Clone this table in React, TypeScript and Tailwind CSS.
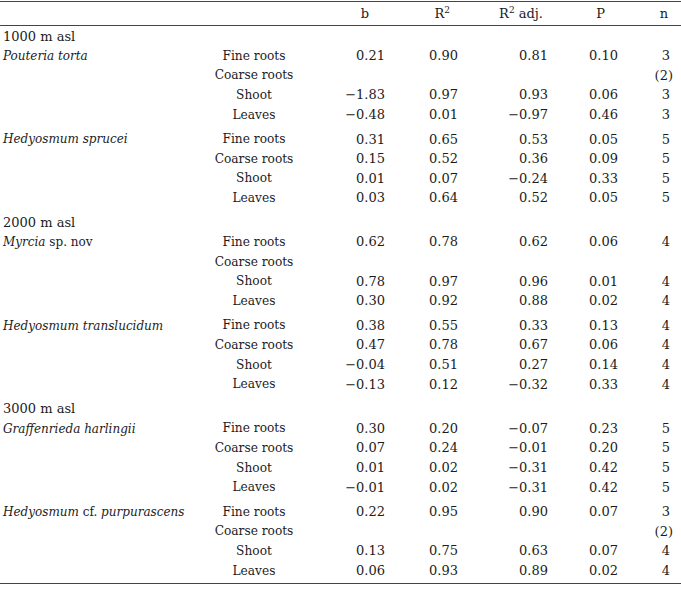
import React from 'react';

type Vals = [string, string, string, string, string];

type Species = {
  name: React.ReactNode;
  rows: [string, Vals][];
};

type Section = {
  label: string;
  species: Species[];
};

const empty: Vals = ['', '', '', '', ''];

const sections: Section[] = [
  {
    label: '1000 m asl',
    species: [
      {
        name: <i>Pouteria torta</i>,
        rows: [
          ['Fine roots', ['0.21', '0.90', '0.81', '0.10', '3']],
          ['Coarse roots', ['', '', '', '', '(2)']],
          ['Shoot', ['−1.83', '0.97', '0.93', '0.06', '3']],
          ['Leaves', ['−0.48', '0.01', '−0.97', '0.46', '3']],
        ],
      },
      {
        name: <i>Hedyosmum sprucei</i>,
        rows: [
          ['Fine roots', ['0.31', '0.65', '0.53', '0.05', '5']],
          ['Coarse roots', ['0.15', '0.52', '0.36', '0.09', '5']],
          ['Shoot', ['0.01', '0.07', '−0.24', '0.33', '5']],
          ['Leaves', ['0.03', '0.64', '0.52', '0.05', '5']],
        ],
      },
    ],
  },
  {
    label: '2000 m asl',
    species: [
      {
        name: (
          <>
            <i>Myrcia</i> sp. nov
          </>
        ),
        rows: [
          ['Fine roots', ['0.62', '0.78', '0.62', '0.06', '4']],
          ['Coarse roots', empty],
          ['Shoot', ['0.78', '0.97', '0.96', '0.01', '4']],
          ['Leaves', ['0.30', '0.92', '0.88', '0.02', '4']],
        ],
      },
      {
        name: <i>Hedyosmum translucidum</i>,
        rows: [
          ['Fine roots', ['0.38', '0.55', '0.33', '0.13', '4']],
          ['Coarse roots', ['0.47', '0.78', '0.67', '0.06', '4']],
          ['Shoot', ['−0.04', '0.51', '0.27', '0.14', '4']],
          ['Leaves', ['−0.13', '0.12', '−0.32', '0.33', '4']],
        ],
      },
    ],
  },
  {
    label: '3000 m asl',
    species: [
      {
        name: <i>Graffenrieda harlingii</i>,
        rows: [
          ['Fine roots', ['0.30', '0.20', '−0.07', '0.23', '5']],
          ['Coarse roots', ['0.07', '0.24', '−0.01', '0.20', '5']],
          ['Shoot', ['0.01', '0.02', '−0.31', '0.42', '5']],
          ['Leaves', ['−0.01', '0.02', '−0.31', '0.42', '5']],
        ],
      },
      {
        name: (
          <>
            <i>Hedyosmum</i> cf. <i>purpurascens</i>
          </>
        ),
        rows: [
          ['Fine roots', ['0.22', '0.95', '0.90', '0.07', '3']],
          ['Coarse roots', ['', '', '', '', '(2)']],
          ['Shoot', ['0.13', '0.75', '0.63', '0.07', '4']],
          ['Leaves', ['0.06', '0.93', '0.89', '0.02', '4']],
        ],
      },
    ],
  },
];

const grid = 'grid grid-cols-[204px_100px_81px_73px_90px_70px_55px] items-center';

function Row({
  first,
  species,
  part,
  vals,
}: {
  first?: React.ReactNode;
  species?: boolean;
  part?: string;
  vals?: Vals;
}) {
  const n = vals ? vals[4] : '';
  return (
    <div className={`${grid} h-[19.6px] whitespace-nowrap`}>
      <div className={species ? 'pl-[3px] text-[12px]' : 'pl-[3px]'}>{first}</div>
      <div className="text-center text-[12.2px]">{part}</div>
      <div className="text-right">{vals?.[0]}</div>
      <div className="text-right">{vals?.[1]}</div>
      <div className="text-right">{vals?.[2]}</div>
      <div className="text-right">{vals?.[3]}</div>
      <div className={n.startsWith('(') ? 'text-right' : 'text-right pr-[3px]'}>{n}</div>
    </div>
  );
}

export default function App() {
  return (
    <div
      className="w-[681px] h-[589px] bg-white text-[#1c1c1c] text-[13px] pt-px"
      style={{ fontFamily: '"DejaVu Serif", "Liberation Serif", serif' }}
    >
      <div className="h-px bg-[#444]" />
      <div className={`${grid} h-[23px]`}>
        <div />
        <div />
        <div className="text-right pr-[16px]">b</div>
        <div className="text-right pr-[8px]">
          R<sup className="text-[9px]">2</sup>
        </div>
        <div className="text-right pr-[5px]">
          R<sup className="text-[9px]">2</sup> adj.
        </div>
        <div className="text-right pr-[13px]">P</div>
        <div className="text-right pr-[5px]">n</div>
      </div>
      <div className="h-px bg-[#444]" />
      <div className="pt-[0.5px]">
        {sections.map((sec, si) => (
          <div key={sec.label} className={si > 0 ? 'mt-[5px]' : ''}>
            <Row first={sec.label} />
            {sec.species.map((sp, i) => (
              <div key={i} className={i > 0 ? 'mt-[5px]' : ''}>
                {sp.rows.map(([part, vals], ri) => (
                  <Row
                    key={part}
                    first={ri === 0 ? sp.name : undefined}
                    species={ri === 0}
                    part={part}
                    vals={vals}
                  />
                ))}
              </div>
            ))}
          </div>
        ))}
      </div>
      <div className="mt-[2.5px] h-px bg-[#444]" />
    </div>
  );
}
